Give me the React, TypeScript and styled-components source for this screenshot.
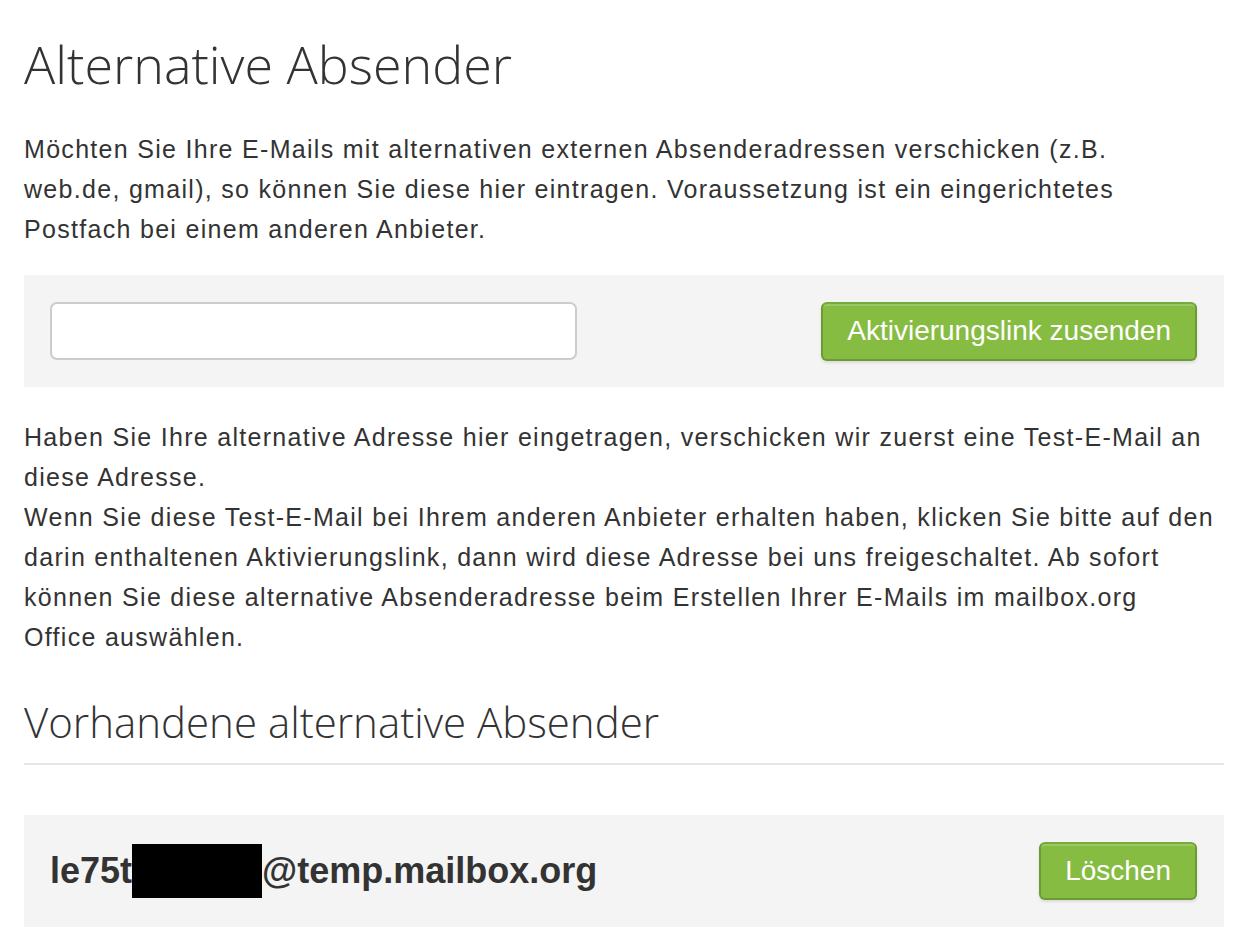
import React from 'react';
import styled, { createGlobalStyle } from 'styled-components';

const GlobalStyle = createGlobalStyle`
  html, body {
    margin: 0;
    padding: 0;
    background: #ffffff;
  }
  body {
    font-family: "Liberation Sans", Arial, Helvetica, sans-serif;
    color: #333333;
  }
`;

const Page = styled.div`
  width: 1200px;
  padding: 32px 32px 16px 24px;
`;

const Title = styled.h1`
  font-family: "Open Sans", sans-serif;
  font-weight: 300;
  font-size: 52px;
  line-height: 64px;
  margin: 0 0 33px;
  color: #333333;
`;

const SubTitle = styled.h2`
  font-family: "Open Sans", sans-serif;
  font-weight: 300;
  font-size: 42px;
  line-height: 50px;
  margin: 40px 0 0;
  padding-bottom: 16px;
  border-bottom: 2px solid #e6e6e6;
  color: #333333;
`;

const Text = styled.p`
  font-size: 25px;
  line-height: 40px;
  letter-spacing: 1.3px;
  margin: 0;
`;

const Panel = styled.div<{ $top: number; $bottom: number }>`
  display: flex;
  align-items: center;
  justify-content: space-between;
  height: 112px;
  box-sizing: border-box;
  background: #f4f4f4;
  padding: 0 27px 0 26px;
  margin: ${(p) => `${p.$top}px 0 ${p.$bottom}px`};
`;

const Field = styled.input`
  width: 527px;
  height: 58px;
  box-sizing: border-box;
  border: 2px solid #cccccc;
  border-radius: 7px;
  background: #ffffff;
  font-size: 22px;
  padding: 0 12px;
  outline: none;
`;

const GreenButton = styled.button<{ $height: number }>`
  height: ${(p) => p.$height}px;
  box-sizing: border-box;
  padding: 0 24px;
  background: #86bc42;
  border: 2px solid #6c9b33;
  border-top-color: #76aa3a;
  border-radius: 6px;
  box-shadow: inset 0 2px 0 rgba(255, 255, 255, 0.18), 0 2px 3px rgba(0, 0, 0, 0.1);
  color: #ffffff;
  font-family: "Liberation Sans", Arial, sans-serif;
  font-size: 28px;
  cursor: pointer;
`;

const Email = styled.span`
  display: flex;
  align-items: center;
  font-size: 36px;
  font-weight: 700;
  color: #333333;
`;

const Redacted = styled.span`
  display: inline-block;
  width: 130px;
  height: 54px;
  background: #000000;
`;

export default function App() {
  return (
    <>
      <GlobalStyle />
      <Page>
        <Title>Alternative Absender</Title>
        <Text>
          Möchten Sie Ihre E-Mails mit alternativen externen Absenderadressen verschicken (z.B.
          <br />
          web.de, gmail), so können Sie diese hier eintragen. Voraussetzung ist ein eingerichtetes
          <br />
          Postfach bei einem anderen Anbieter.
        </Text>
        <Panel $top={26} $bottom={30}>
          <Field type="text" />
          <GreenButton $height={59}>Aktivierungslink zusenden</GreenButton>
        </Panel>
        <Text>
          Haben Sie Ihre alternative Adresse hier eingetragen, verschicken wir zuerst eine Test-E-Mail an
          <br />
          diese Adresse.
          <br />
          Wenn Sie diese Test-E-Mail bei Ihrem anderen Anbieter erhalten haben, klicken Sie bitte auf den
          <br />
          darin enthaltenen Aktivierungslink, dann wird diese Adresse bei uns freigeschaltet. Ab sofort
          <br />
          können Sie diese alternative Absenderadresse beim Erstellen Ihrer E-Mails im mailbox.org
          <br />
          Office auswählen.
        </Text>
        <SubTitle>Vorhandene alternative Absender</SubTitle>
        <Panel $top={50} $bottom={0}>
          <Email>
            le75t<Redacted />@temp.mailbox.org
          </Email>
          <GreenButton $height={58}>Löschen</GreenButton>
        </Panel>
      </Page>
    </>
  );
}
